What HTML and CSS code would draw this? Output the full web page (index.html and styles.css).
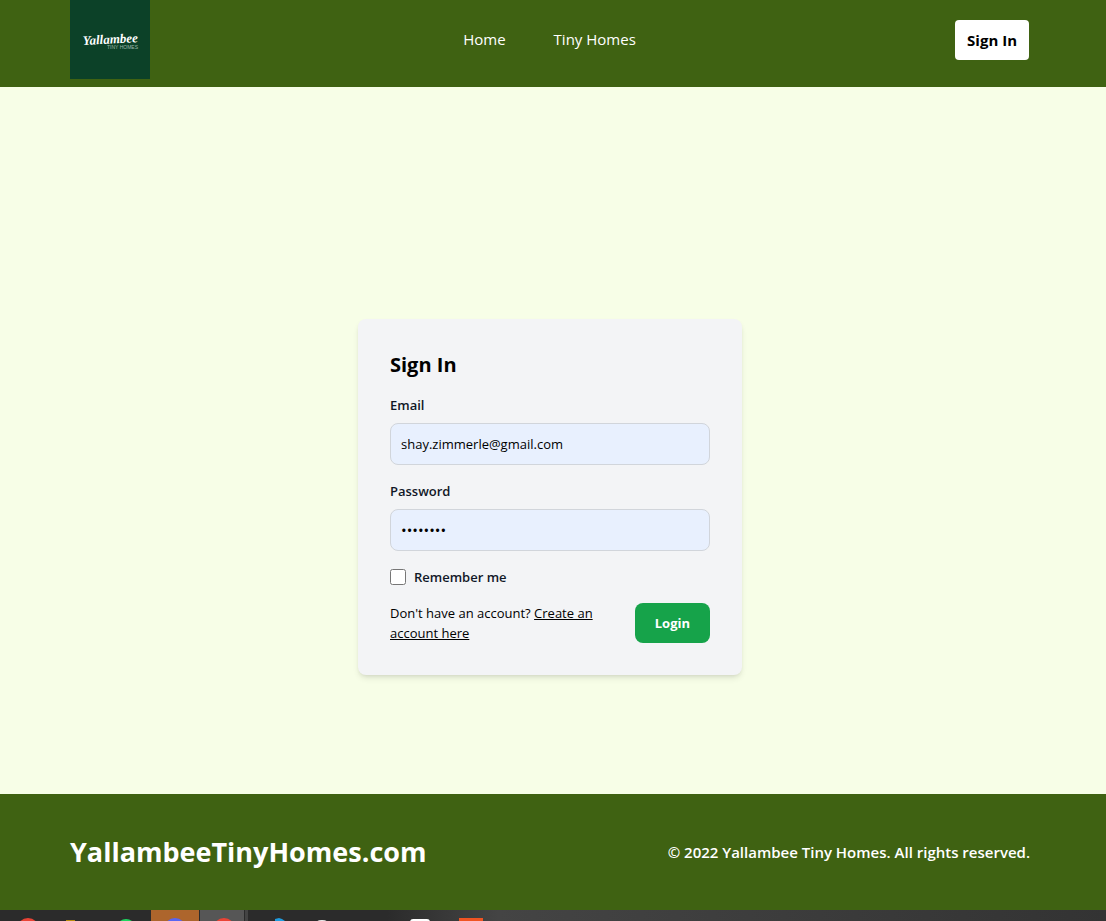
FILE: index.html
```html
<!DOCTYPE html>
<html lang="en">
<head>
<meta charset="utf-8">
<meta name="viewport" content="width=device-width, initial-scale=1">
<title>Yallambee Tiny Homes</title>
<link rel="stylesheet" href="styles.css">
</head>
<body>
<header class="site-header">
  <div class="header-side">
    <a class="logo" href="#" aria-label="Yallambee Tiny Homes">
      <svg width="80" height="79" viewBox="0 0 80 79">
        <rect width="80" height="79" fill="#0c4128"/>
        <text class="logo-name" x="13" y="45" transform="rotate(-3 13 45)">Yallambee</text>
        <text class="logo-sub" x="37" y="49">TINY HOMES</text>
      </svg>
    </a>
  </div>
  <nav class="nav">
    <a href="#">Home</a>
    <a href="#">Tiny Homes</a>
  </nav>
  <div class="header-side header-end">
    <button class="signin" type="button">Sign In</button>
  </div>
</header>
<main class="main">
  <form class="card">
    <h1 class="title">Sign In</h1>
    <div class="field">
      <label for="email">Email</label>
      <input class="input" id="email" type="email" value="shay.zimmerle@gmail.com">
    </div>
    <div class="field">
      <label for="password">Password</label>
      <input class="input password" id="password" type="password" value="password">
    </div>
    <div class="remember">
      <input class="check" id="remember" type="checkbox">
      <label for="remember">Remember me</label>
    </div>
    <div class="actions">
      <p class="signup">Don't have an account? <a href="#">Create an account here</a></p>
      <button class="login" type="button">Login</button>
    </div>
  </form>
</main>
<footer class="site-footer">
  <span class="brand">YallambeeTinyHomes.com</span>
  <span class="copyright">© 2022 Yallambee Tiny Homes. All rights reserved.</span>
</footer>
<div class="taskbar">
  <svg width="500" height="11" viewBox="0 0 500 11" aria-hidden="true">
    <rect x="151" width="48" height="11" fill="#ad652c"/>
    <rect x="200" width="44" height="11" fill="#565656"/>
    <rect x="245" width="3" height="11" fill="#444"/>
    <circle cx="28" cy="19" r="11" fill="#ea4335"/>
    <rect x="66" y="10" width="9" height="1" fill="#b98a0c"/>
    <circle cx="126" cy="19" r="10" fill="#1ed760"/>
    <circle cx="175" cy="19" r="11" fill="#5865f2"/>
    <circle cx="224" cy="19" r="11" fill="#ea4335"/>
    <path d="M275 11V9l4-1 3 1 3 2z" fill="#1f9cdf"/>
    <ellipse cx="322" cy="12" rx="5" ry="2" fill="#eee"/>
    <rect x="410" y="9" width="20" height="8" rx="3" fill="#fff"/>
    <rect x="459" y="8" width="24" height="3" fill="#f05423"/>
  </svg>
</div>
</body>
</html>
```
FILE: styles.css
```css
* {
  box-sizing: border-box;
}

body {
  margin: 0;
  min-height: 100vh;
  display: flex;
  flex-direction: column;
  background: #f7fee7;
  color: #000;
  font: 13px/20px "Segoe UI", "Open Sans", "Noto Sans", sans-serif;
}

button,
input {
  font: inherit;
}

.site-header {
  display: flex;
  align-items: flex-start;
  padding: 0 77px 8px 70px;
  background: #3f6212;
}

.header-side {
  flex: 1;
  display: flex;
}

.header-end {
  justify-content: flex-end;
  align-self: center;
}

.logo svg {
  display: block;
}

.logo-name {
  fill: #fff;
  font: italic bold 13px "Liberation Serif", serif;
}

.logo-sub {
  fill: #9db8a8;
  font: 5px "Liberation Sans", sans-serif;
}

.nav {
  display: flex;
  gap: 48px;
  align-self: center;
  padding-bottom: 2px;
  font-size: 15px;
  line-height: 24px;
}

.nav a {
  color: #fff;
  text-decoration: none;
}

.signin {
  padding: 8px 12px;
  border: 0;
  border-radius: 4px;
  background: #fff;
  color: #000;
  font-size: 15px;
  font-weight: 700;
  line-height: 24px;
}

.main {
  flex: 1;
  display: flex;
  align-items: center;
  justify-content: center;
  padding: 112px 6px 0 0;
}

.card {
  display: flex;
  flex-direction: column;
  gap: 16px;
  width: 100%;
  max-width: 384px;
  padding: 32px;
  border-radius: 8px;
  background: #f3f4f6;
  box-shadow: 0 4px 6px -1px rgba(0, 0, 0, 0.1), 0 2px 4px -2px rgba(0, 0, 0, 0.1);
}

.title {
  margin: 0;
  font-size: 20px;
  font-weight: 700;
  line-height: 28px;
}

.field {
  display: flex;
  flex-direction: column;
  gap: 8px;
}

.field label,
.remember label {
  color: #111827;
  font-weight: 600;
}

.input {
  width: 100%;
  height: 42px;
  padding: 10px;
  border: 1px solid #d1d5db;
  border-radius: 8px;
  background: #e8f0fe;
  color: #000;
}

.password {
  font-size: 15px;
}

.remember {
  display: flex;
  align-items: center;
  gap: 8px;
}

.check {
  width: 16px;
  height: 16px;
  margin: 0;
}

.actions {
  display: flex;
  align-items: center;
  justify-content: space-between;
  gap: 32px;
}

.signup {
  margin: 0;
}

.signup a {
  color: #000;
}

.login {
  padding: 10px 20px;
  border: 0;
  border-radius: 8px;
  background: #16a34a;
  color: #fff;
  font-weight: 700;
}

.site-footer {
  display: flex;
  align-items: center;
  justify-content: space-between;
  padding: 40px 76px 40px 70px;
  background: #3f6212;
  color: #fff;
}

.brand {
  font-size: 27px;
  font-weight: 700;
  line-height: 36px;
}

.copyright {
  font-size: 15px;
  font-weight: 600;
  line-height: 24px;
}

.taskbar {
  overflow: hidden;
  background: linear-gradient(90deg, #2b2b2b 35%, #444 45%, #333);
}

.taskbar svg {
  display: block;
}
```
